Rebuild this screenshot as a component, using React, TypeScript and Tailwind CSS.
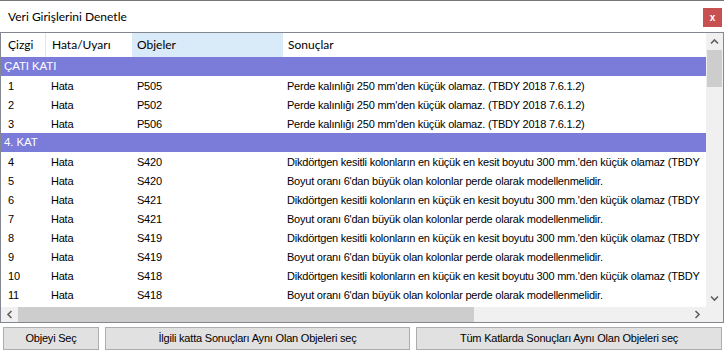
import React from 'react';

type Row = { kind: 'group'; label: string } | { kind: 'row'; no: number; type: string; obj: string; msg: string };

const perde = "Perde kalınlığı 250 mm'den küçük olamaz. (TBDY 2018 7.6.1.2)";
const dik = "Dikdörtgen kesitli kolonların en küçük en kesit boyutu 300 mm.'den küçük olamaz (TBDY";
const boy = "Boyut oranı 6'dan büyük olan kolonlar perde olarak modellenmelidir.";

const rows: Row[] = [
  { kind: 'group', label: 'ÇATI KATI' },
  { kind: 'row', no: 1, type: 'Hata', obj: 'P505', msg: perde },
  { kind: 'row', no: 2, type: 'Hata', obj: 'P502', msg: perde },
  { kind: 'row', no: 3, type: 'Hata', obj: 'P506', msg: perde },
  { kind: 'group', label: '4. KAT' },
  { kind: 'row', no: 4, type: 'Hata', obj: 'S420', msg: dik },
  { kind: 'row', no: 5, type: 'Hata', obj: 'S420', msg: boy },
  { kind: 'row', no: 6, type: 'Hata', obj: 'S421', msg: dik },
  { kind: 'row', no: 7, type: 'Hata', obj: 'S421', msg: boy },
  { kind: 'row', no: 8, type: 'Hata', obj: 'S419', msg: dik },
  { kind: 'row', no: 9, type: 'Hata', obj: 'S419', msg: boy },
  { kind: 'row', no: 10, type: 'Hata', obj: 'S418', msg: dik },
  { kind: 'row', no: 11, type: 'Hata', obj: 'S418', msg: boy },
];

const Chevron = ({ dir }: { dir: 'up' | 'down' | 'left' | 'right' }) => {
  const rot = { up: 0, right: 90, down: 180, left: 270 }[dir];
  return (
    <svg width="9" height="9" viewBox="0 0 9 9" style={{ transform: `rotate(${rot}deg)` }}>
      <path d="M1 6.5 L4.5 3 L8 6.5" fill="none" stroke="#606060" strokeWidth="1.6" />
    </svg>
  );
};

const App = () => {
  return (
    <div className="w-[724px] h-[352px] bg-white overflow-hidden text-black" style={{ fontFamily: '"Liberation Sans", Arial, sans-serif' }}>
      <div className="h-px bg-[#767676]" />
      <div className="h-[31px] flex items-start justify-between pl-2 pr-px">
        <span className="mt-[7px] text-[12px] text-black" style={{ fontFamily: 'Lato, "Noto Sans", sans-serif' }}>
          Veri Girişlerini Denetle
        </span>
        <div className="mt-[7px] mr-px w-[19px] h-[19px] bg-[#c75050] flex items-center justify-center text-white text-[10px] font-semibold leading-none">
          x
        </div>
      </div>

      <div className="h-[291px] border border-[#828790] flex">
        <div className="flex-1 flex flex-col min-w-0">
          <div className="h-[274px] overflow-hidden">
            <div className="grid grid-cols-[45px_86px_151px_1fr] h-[24px] text-[12px] items-stretch" style={{ fontFamily: 'Lato, "Noto Sans", sans-serif' }}>
              <div className="pl-[7px] flex items-center border-r border-[#e5e5e5]">Çizgi</div>
              <div className="pl-[6px] flex items-center">Hata/Uyarı</div>
              <div className="pl-[5px] flex items-center bg-[#d9ebf9]">Objeler</div>
              <div className="pl-[5px] flex items-center">Sonuçlar</div>
            </div>
            {rows.map((r, i) =>
              r.kind === 'group' ? (
                <div key={i} className="h-[19px] bg-[#7b7bda] text-white text-[11.5px] tracking-[-0.1px] pl-[3px] flex items-center">
                  {r.label}
                </div>
              ) : (
                <div key={i} className="grid grid-cols-[45px_86px_151px_1fr] h-[19px] text-[11px] tracking-[-0.22px] items-center whitespace-nowrap pt-[2px]">
                  <div className="pl-[7px]">{r.no}</div>
                  <div className="pl-[5px]">{r.type}</div>
                  <div className="pl-[5px]">{r.obj}</div>
                  <div className="pl-[4px] overflow-hidden">{r.msg}</div>
                </div>
              )
            )}
          </div>
          <div className="h-[15px] bg-[#f0f0f0] flex items-center">
            <div className="w-[17px] flex items-center justify-center">
              <Chevron dir="left" />
            </div>
            <div className="w-[456px] h-[15px] bg-[#cdcdcd]" />
            <div className="flex-1" />
            <div className="w-[17px] flex items-center justify-center">
              <Chevron dir="right" />
            </div>
          </div>
        </div>
        <div className="w-[17px] flex flex-col bg-[#f0f0f0]">
          <div className="h-[274px] flex flex-col">
            <div className="h-[17px] flex items-center justify-center">
              <Chevron dir="up" />
            </div>
            <div className="h-[37px] mx-px bg-[#cdcdcd]" />
            <div className="flex-1" />
            <div className="h-[17px] flex items-center justify-center">
              <Chevron dir="down" />
            </div>
          </div>
          <div className="h-[15px] bg-[#f0f0f0]" />
        </div>
      </div>

      <div className="flex gap-[6px] pl-[3px] mt-[4px] text-[11px] tracking-[-0.2px]">
        <button className="w-[96px] h-[23px] bg-[#e1e1e1] border border-[#adadad]">Objeyi Seç</button>
        <button className="w-[305px] h-[23px] bg-[#e1e1e1] border border-[#adadad]">İlgili katta Sonuçları Aynı Olan Objeleri seç</button>
        <button className="w-[306px] h-[23px] bg-[#e1e1e1] border border-[#adadad]">Tüm Katlarda Sonuçları Aynı Olan Objeleri seç</button>
      </div>
    </div>
  );
};

export default App;
